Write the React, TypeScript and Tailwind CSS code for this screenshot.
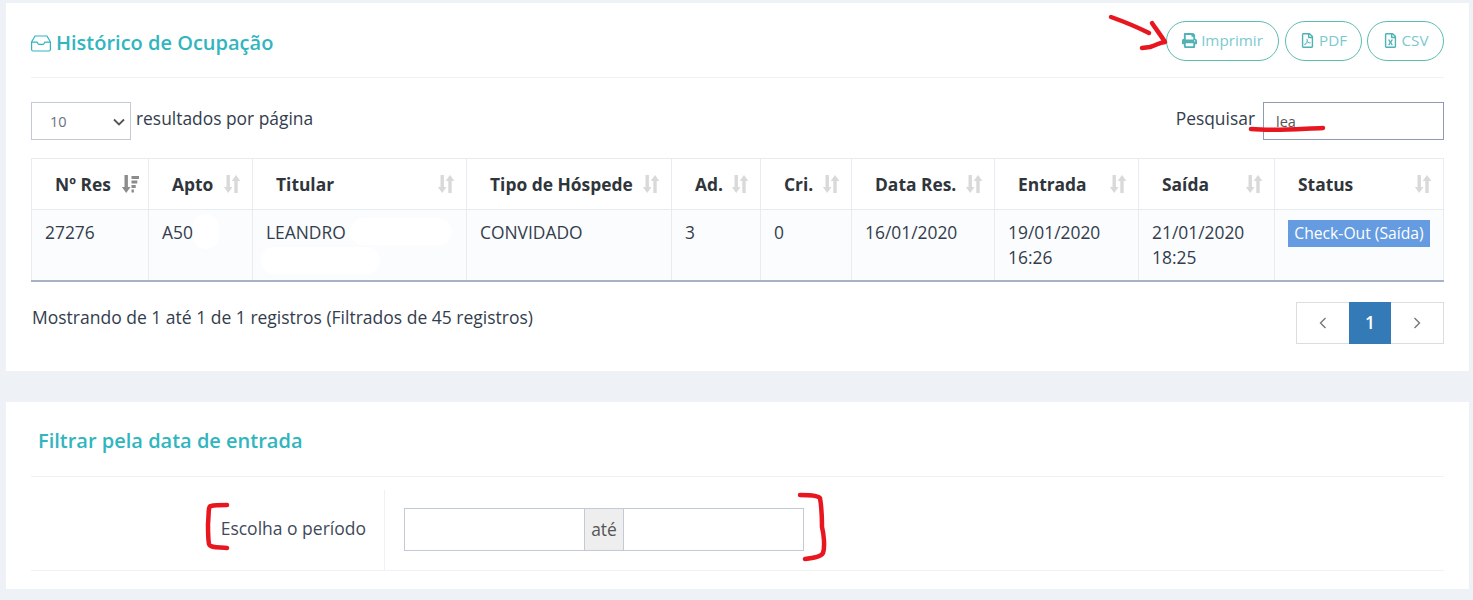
import { FaPrint, FaRegFileExcel, FaRegFilePdf } from "react-icons/fa";

const columns = [
    { label: "Nº Res", width: "w-[117px]", active: true },
    { label: "Apto", width: "w-[104px]" },
    { label: "Titular", width: "w-[214px]" },
    { label: "Tipo de Hóspede", width: "w-[205px]" },
    { label: "Ad.", width: "w-[89px]" },
    { label: "Cri.", width: "w-[91px]" },
    { label: "Data Res.", width: "w-[143px]" },
    { label: "Entrada", width: "w-[144px]" },
    { label: "Saída", width: "w-[136px]" },
    { label: "Status", width: "w-[169px]" },
];

const SortIcon = ({ active = false }: { active?: boolean }) => (
    <svg viewBox="0 0 18 18" className="w-[18px] h-[18px] shrink-0">
        <path d="M3.500 0h3.400v12h2.600l-4.300 6-4.300-6h2.600z" fill={active ? "#8c8c8c" : "#d9d9d9"} />
        {active ? (
            <path d="M10.500 1h7.500v3h-7.500zM10.500 5.500h5.800v3h-5.800zM10.500 10h4.200v3h-4.200zM10.500 14.500h2.400v3h-2.400z" fill="#8c8c8c" />
        ) : (
            <path d="M13 0l4.300 6h-2.600v12h-3.400V6H8.700z" fill="#d9d9d9" />
        )}
    </svg>
);

const InboxIcon = () => (
    <svg viewBox="0 0 20 17" fill="none" stroke="currentColor" strokeWidth="1.200" className="w-5 h-[17px] shrink-0">
        <path d="M4 1h12l3.400 6v7.500a1.500 1.500 0 0 1-1.500 1.500H2.100a1.500 1.500 0 0 1-1.500-1.500V7z" />
        <path d="M.8 7.200h5.200c.6 0 .8 2.200 1.800 2.200h4.400c1 0 1.200-2.200 1.800-2.200h5.200" />
    </svg>
);

const PageArrow = ({ d }: { d: string }) => (
    <svg viewBox="0 0 8 12" className="w-2 h-3" fill="none" stroke="#777" strokeWidth="1.400">
        <path d={d} />
    </svg>
);

const ExportButton = ({ icon, label, width }: { icon: React.ReactNode; label: string; width: string }) => (
    <button className={`${width} h-10 pb-px rounded-[20px] border border-[#5bbcb0] flex items-center justify-center gap-[4px] text-[15.2px] text-[#7bc9cf]`}>
        <span className="text-[#4fb3b5] text-[15px]">{icon}</span>
        {label}
    </button>
);

// Marcações vermelhas desenhadas à mão sobre a captura
const Annotations = () => (
    <svg className="absolute left-0 top-0 w-[1473px] h-[600px] pointer-events-none" viewBox="0 0 1473 600" fill="none" stroke="#e8171f" strokeWidth="4.500" strokeLinecap="round" strokeLinejoin="round">
        <path d="M1111 17c14 5 28 11 38 16" />
        <path d="M1152 23c4 6 10 14 13 19-7 1-6 2-15 5l-8 1" />
        <path d="M1251 129c24 2 46 0 72-1" />
        <path d="M227 505c-6 0-12 0-16 1-3 0-2 7-3 18 0 8 0 15 1 20 1 4 10 3 18 4" />
        <path d="M800 495c8 0 17 0 20 3 1 6 2 20 2 29 2 8 3 20 1 26-2 4-10 5-18 6" />
    </svg>
);

const App = () => {
    return (
        <div className="relative w-[1473px] h-[600px] overflow-hidden bg-[#eef1f5] pt-[3px] px-[6px] font-['Open_Sans',sans-serif] text-[#333d4d] text-[17.4px]">
            <section className="w-[1463px] h-[368px] bg-white px-[25px]">
                <header className="h-[74px] border-b border-[#eef1f5] box-content flex items-start justify-between">
                    <h2 className="mt-[26px] flex items-center gap-[5px] text-[20px] leading-7 font-semibold text-[#31b5bf]">
                        <InboxIcon />
                        Histórico de Ocupação
                    </h2>
                    <div className="mt-[18px] flex gap-[5px]">
                        <ExportButton icon={<FaPrint />} label="Imprimir" width="w-[113px] mr-px" />
                        <ExportButton icon={<FaRegFilePdf />} label="PDF" width="w-[77px]" />
                        <ExportButton icon={<FaRegFileExcel />} label="CSV" width="w-[77px]" />
                    </div>
                </header>

                <div className="mt-6 flex justify-between items-start">
                    <div className="flex items-start gap-[5px]">
                        <div className="relative w-[100px] h-[38px] border border-[#c2cad8] flex items-center pl-[18px] pt-px text-[14.500px] text-[#6b7280]">
                            10
                            <svg viewBox="0 0 12 8" className="absolute right-[5px] top-[15px] w-3 h-2" fill="none" stroke="#555" strokeWidth="1.800">
                                <path d="M1 1.500l5 5 5-5" />
                            </svg>
                        </div>
                        <span className="leading-[32px]">resultados por página</span>
                    </div>
                    <div className="flex items-start gap-2">
                        <span className="leading-[32px]">Pesquisar</span>
                        <div className="w-[181px] h-[38px] border border-[#8f9ab5] flex items-center pl-3 pt-px text-[14.500px] text-[#555]">lea</div>
                    </div>
                </div>

                <table className="mt-[18px] w-[1412px] table-fixed border-collapse">
                    <thead>
                        <tr className="h-[51px]">
                            {columns.map((c) => (
                                <th key={c.label} className={`${c.width} border border-[#e7ecf1] pl-[23px] pr-[11px] font-bold text-[17.4px] text-left text-[#2f353b]`}>
                                    <div className={`flex items-center justify-between ${c.active ? "-mr-[2px]" : ""}`}>
                                        <span className="whitespace-nowrap">{c.label}</span>
                                        <SortIcon active={c.active} />
                                    </div>
                                </th>
                            ))}
                        </tr>
                    </thead>
                    <tbody>
                        <tr className="h-[71px] bg-[#fbfcfd] align-top border-b-2 border-[#a5b3c5] leading-[25px]">
                            <td className="border-x border-[#e7ecf1] px-[13px] pt-[10px]">27276</td>
                            <td className="relative border-x border-[#e7ecf1] px-[13px] pt-[10px]">
                                A50
                                <span className="absolute left-[44px] top-[4px] w-[26px] h-[35px] rounded-full bg-white" />
                            </td>
                            <td className="relative border-x border-[#e7ecf1] px-[13px] pt-[10px]">
                                LEANDRO
                                <span className="absolute left-[97px] top-[8px] w-[102px] h-[27px] rounded-full bg-white" />
                                <span className="absolute left-[8px] top-[37px] w-[119px] h-[27px] rounded-full bg-white" />
                            </td>
                            <td className="border-x border-[#e7ecf1] px-[13px] pt-[10px]">CONVIDADO</td>
                            <td className="border-x border-[#e7ecf1] px-[13px] pt-[10px]">3</td>
                            <td className="border-x border-[#e7ecf1] px-[13px] pt-[10px]">0</td>
                            <td className="border-x border-[#e7ecf1] px-[13px] pt-[10px]">16/01/2020</td>
                            <td className="border-x border-[#e7ecf1] px-[13px] pt-[10px]">19/01/2020<br />16:26</td>
                            <td className="border-x border-[#e7ecf1] px-[13px] pt-[10px]">21/01/2020<br />18:25</td>
                            <td className="border-x border-[#e7ecf1] pl-[13px] pt-[10px]">
                                <span className="block w-[142px] h-[27px] bg-[#659be0] text-white text-center text-[15.7px] leading-[27px] whitespace-nowrap">Check-Out (Saída)</span>
                            </td>
                        </tr>
                    </tbody>
                </table>

                <div className="mt-[20px] flex justify-between items-start">
                    <span className="mt-[3px] ml-px leading-[24px] text-[17.5px]">Mostrando de 1 até 1 de 1 registros (Filtrados de 45 registros)</span>
                    <div className="flex h-[42px] border border-[#ddd] text-[#777]">
                        <span className="w-[52px] flex items-center justify-center"><PageArrow d="M6.500 1L1.500 6l5 5" /></span>
                        <span className="w-[42px] -my-px flex items-center justify-center bg-[#337ab7] text-white font-semibold">1</span>
                        <span className="w-[52px] flex items-center justify-center"><PageArrow d="M1.500 1l5 5-5 5" /></span>
                    </div>
                </div>
            </section>

            <section className="mt-[31px] w-[1463px] h-[187px] bg-white px-[25px]">
                <header className="h-[49px] border-b border-[#eef1f5] box-content pl-[7px] pt-[25px]">
                    <h2 className="text-[20px] leading-7 font-semibold text-[#31b5bf]">Filtrar pela data de entrada</h2>
                </header>
                <div className="mt-[13px] flex h-[81px] border-b border-[#eef1f5] box-border">
                    <div className="w-[354px] border-r border-[#eef1f5] pr-[18px] text-right leading-[76px] text-[17.5px] text-[#3f4a5a]">Escolha o período</div>
                    <div className="ml-[19px] mt-[18px] w-[400px] h-[43px] border border-[#c2cad8] flex">
                        <span className="flex-1" />
                        <span className="w-[40px] bg-[#eeeeee] border-x border-[#c2cad8] flex items-center justify-center text-[#555] text-[17.4px]">até</span>
                        <span className="w-[179px]" />
                    </div>
                </div>
            </section>

            <Annotations />
        </div>
    );
};

export default App;
